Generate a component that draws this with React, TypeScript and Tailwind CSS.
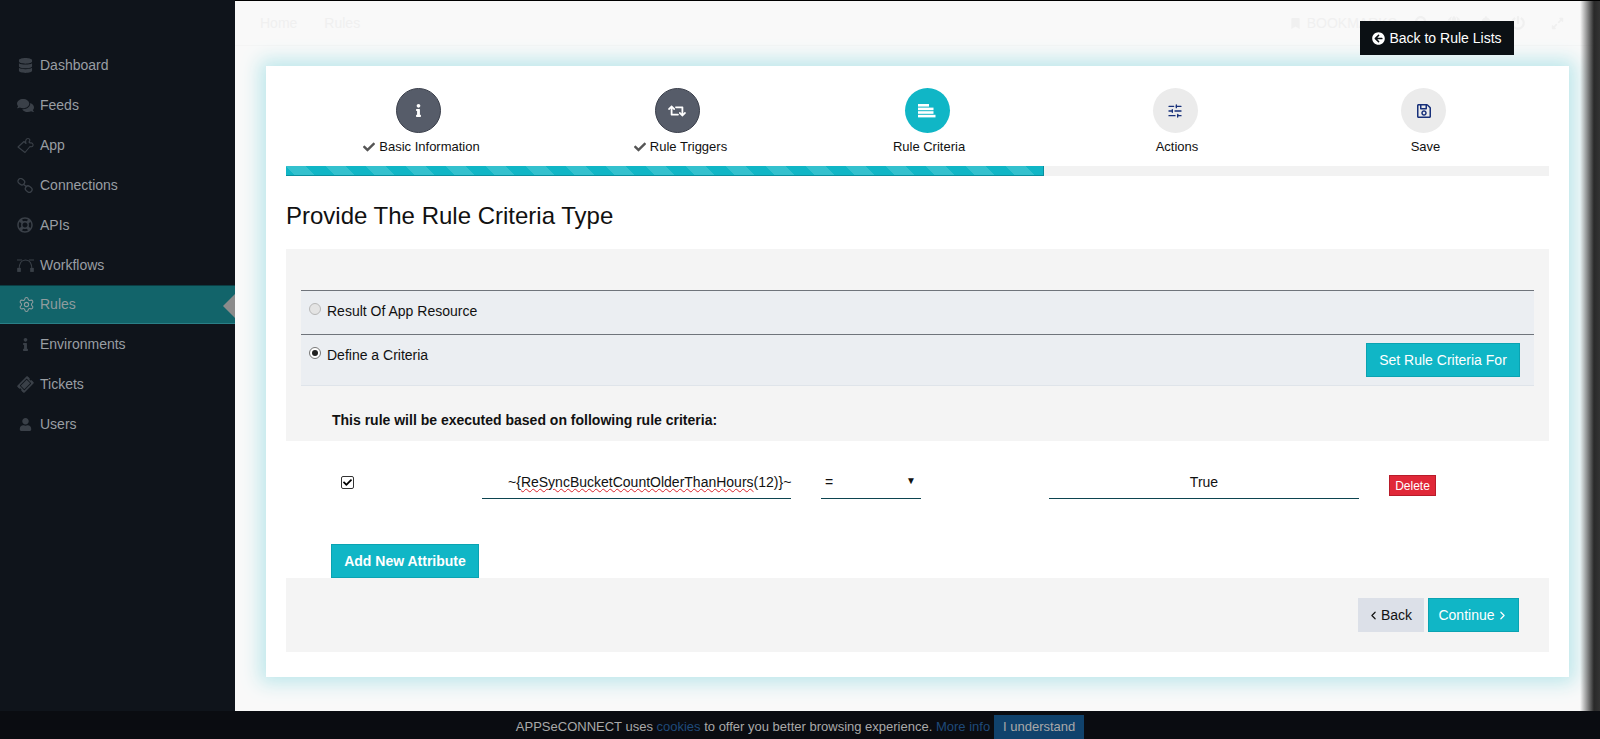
import React from "react";
import { FaDatabase, FaComments, FaRegLifeRing, FaInfo, FaTicketAlt, FaUser, FaRetweet, FaRegSave, FaCheck, FaArrowCircleLeft, FaBookmark, FaSearch, FaGlobe, FaBell, FaPowerOff, FaExpandAlt } from "react-icons/fa";
import { Settings, SlidersHorizontal, ChevronLeft, ChevronRight } from "lucide-react";

const Bezier = () => (
  <svg width="17" height="14" viewBox="0 0 17 14" fill="none" stroke="currentColor" strokeWidth="1.2">
    <path d="M2 12C2 5 5 2 8.5 2S15 5 15 12" />
    <rect x="0.8" y="10.5" width="2.4" height="2.8" fill="currentColor" />
    <rect x="13.8" y="10.5" width="2.4" height="2.8" fill="currentColor" />
    <path d="M0 2h5M12 2h5" />
  </svg>
);
const Chain = () => (
  <svg width="16" height="15" viewBox="0 0 16 15" fill="none" stroke="currentColor" strokeWidth="1.3">
    <rect x="0.8" y="1" width="7" height="5.4" rx="2.7" transform="rotate(38 4.3 3.7)" />
    <rect x="8.2" y="8.4" width="7" height="5.4" rx="2.7" transform="rotate(38 11.7 11.1)" />
    <path d="M6 6l4 3" />
  </svg>
);
const PieceOutline = () => (
  <svg width="17" height="17" viewBox="0 0 17 17" fill="none" stroke="currentColor" strokeWidth="1.1" strokeLinejoin="round">
    <path d="M1 10L7 4.5L9 6.5C8 4 9 1.5 11 1.5C13 1.5 13.5 3.5 12 5L13 6C15 5.5 16.5 6.5 16 8.5C15.5 10 14 10 13 9.5L8 15.5Z" />
  </svg>
);
const CriteriaIcon = () => (
  <svg width="18" height="14" viewBox="0 0 18 14" fill="#fff">
    <rect x="0" y="0" width="11" height="2.6" />
    <rect x="0" y="3.6" width="15.5" height="2.6" />
    <rect x="0" y="7.2" width="15.5" height="2.6" />
    <rect x="0" y="10.8" width="17.5" height="2.6" />
  </svg>
);

const nav: { label: string; icon: React.ReactNode; active?: boolean }[] = [
  { label: "Dashboard", icon: <FaDatabase size={15} /> },
  { label: "Feeds", icon: <FaComments size={17} /> },
  { label: "App", icon: <PieceOutline /> },
  { label: "Connections", icon: <Chain /> },
  { label: "APIs", icon: <FaRegLifeRing size={16} /> },
  { label: "Workflows", icon: <Bezier /> },
  { label: "Rules", icon: <Settings size={17} strokeWidth={1.5} />, active: true },
  { label: "Environments", icon: <FaInfo size={13} /> },
  { label: "Tickets", icon: <FaTicketAlt size={15} className="-rotate-45" /> },
  { label: "Users", icon: <FaUser size={13} /> },
];

const steps: { label: string; done?: boolean; tone: "done" | "current" | "todo"; icon: React.ReactNode }[] = [
  { label: "Basic Information", done: true, tone: "done", icon: <FaInfo size={13} className="text-white" /> },
  { label: "Rule Triggers", done: true, tone: "done", icon: <FaRetweet size={18} className="text-white" /> },
  { label: "Rule Criteria", tone: "current", icon: <CriteriaIcon /> },
  { label: "Actions", tone: "todo", icon: <SlidersHorizontal size={16} strokeWidth={2} className="text-[#17307a]" /> },
  { label: "Save", tone: "todo", icon: <FaRegSave size={16} className="text-[#17307a]" /> },
];

export default function App() {
  return (
    <div className="relative flex h-[739px] w-[1600px] flex-col overflow-hidden bg-[#f9f9f9] font-['Liberation_Sans',Arial,sans-serif] text-[14px] text-[#111]">
      <div className="flex h-[711px]">
        <aside className="w-[235px] shrink-0 bg-[#0f141b] pt-[45px]">
          {nav.map((n) => (
            <div
              key={n.label}
              className={
                n.active
                  ? "relative flex h-[39px] items-center border-t border-b border-t-[#0b3e44] border-b-[#2a7f87] bg-[#12646a] text-[#8f9c9e]"
                  : "flex h-10 items-center text-[#999ea3]"
              }
            >
              <span className={n.active ? "flex w-[40px] justify-center pl-[12px] text-[#8f9c9e]" : "flex w-[40px] justify-center pl-[10px] text-[#3a4048]"}>{n.icon}</span>
              <span>{n.label}</span>
              {n.active && <span className="absolute right-0 top-[8px] h-0 w-0 border-y-[12px] border-r-[12px] border-y-transparent border-r-[#8b8b8b]" />}
            </div>
          ))}
        </aside>

        <main className="relative flex-1 border-t border-black">
          <header className="flex h-[45px] items-center border-b border-[#f5f5f5] pl-[25px] pr-[36px] text-[14px] text-[#f0f0f0]">
            <span>Home</span>
            <span className="ml-[27px]">Rules</span>
            <div className="ml-auto flex items-center gap-[18px]">
              <span className="flex items-center gap-[6px]"><FaBookmark size={11} />BOOKMARKS</span>
              <FaSearch size={14} />
              <FaGlobe size={14} />
              <FaBell size={14} />
              <FaPowerOff size={14} />
              <span className="ml-[8px]"><FaExpandAlt size={13} /></span>
            </div>
          </header>

          <section className="ml-[31px] mt-[20px] h-[611px] w-[1303px] bg-white px-[20px] pt-[22px] shadow-[0_0_18px_6px_#bce7eb]">
            <div className="grid grid-cols-[264px_254px_246px_250px_247px]">
              {steps.map((s) => (
                <div key={s.label} className="flex flex-col items-center">
                  <div
                    className={
                      s.tone === "done"
                        ? "flex h-[45px] w-[45px] items-center justify-center rounded-full border border-[#3a3f4b] bg-[#565c69]"
                        : s.tone === "current"
                        ? "flex h-[45px] w-[45px] items-center justify-center rounded-full bg-[#10b6c6]"
                        : "flex h-[45px] w-[45px] items-center justify-center rounded-full bg-[#ebebeb]"
                    }
                  >
                    {s.icon}
                  </div>
                  <div className={s.done ? "mt-[4px] flex h-[20px] items-center gap-[4px] pl-[7px] text-[13px] text-[#111]" : "mt-[4px] flex h-[20px] items-center gap-[4px] pl-[4px] text-[13px] text-[#111]"}>
                    {s.done && <FaCheck size={12} className="text-[#555]" />}
                    <span>{s.label}</span>
                  </div>
                </div>
              ))}
            </div>

            <div className="mt-[9px] h-[10px] w-full bg-[#f2f2f2]">
              <div className="h-full w-[758px] border-b border-r border-[#0a8f9e] bg-[#10b6c6] bg-[linear-gradient(45deg,rgba(255,255,255,0.15)_25%,transparent_25%,transparent_50%,rgba(255,255,255,0.15)_50%,rgba(255,255,255,0.15)_75%,transparent_75%)] bg-[length:40px_40px]" />
            </div>

            <h1 className="mt-[25px] h-[30px] text-[24px] leading-[30px] text-[#111]">Provide The Rule Criteria Type</h1>

            <div className="mt-[18px] h-[192px] bg-[#f4f4f4] px-[15px] pt-[41px]">
              <div className="flex h-[44px] items-start border-t border-[#6f747b] bg-[#ebeef2] pl-[8px] pt-[10px]">
                <span className="mr-[6px] mt-[2px] h-[12px] w-[12px] rounded-full border border-[#b8b8b8] bg-[#e4e4e4]" />
                <span>Result Of App Resource</span>
              </div>
              <div className="flex h-[52px] items-start justify-between border-b border-t border-b-[#dfe4ea] border-t-[#6f747b] bg-[#ebeef2] pl-[8px] pr-[14px] pt-[10px]">
                <div className="flex items-start">
                  <span className="mr-[6px] mt-[2px] flex h-[12px] w-[12px] items-center justify-center rounded-full border border-[#777] bg-white">
                    <span className="h-[6px] w-[6px] rounded-full bg-[#222]" />
                  </span>
                  <span>Define a Criteria</span>
                </div>
                <button className="-mt-[2px] flex h-[34px] w-[154px] items-center justify-center border border-[#0aa3b2] bg-[#10b6c6] text-[14px] text-white">Set Rule Criteria For</button>
              </div>
              <p className="ml-[31px] mt-[24px] text-[14px] font-bold leading-[20px] text-[#111]">This rule will be executed based on following rule criteria:</p>
            </div>

            <div className="mt-[23px] flex h-[35px] items-start">
              <span className="ml-[55px] mt-[12px] flex h-[13px] w-[13px] items-center justify-center rounded-[2px] border border-[#333] bg-white">
                <FaCheck size={9} className="text-[#000]" />
              </span>
              <div className="ml-[128px] h-[35px] w-[309px] whitespace-nowrap border-b border-[#0c4450] pl-[26px] pt-[9px] text-left leading-[18px]">
                ~{"{"}<span className="underline decoration-[#d8232a] decoration-wavy decoration-1">ReSyncBucketCountOlderThanHours</span>(12){"}"}~
              </div>
              <div className="ml-[30px] flex h-[35px] w-[100px] justify-between border-b border-[#0c4450] pl-[4px] pr-[5px] pt-[9px] leading-[18px]">
                <span>=</span>
                <span className="text-[10px] leading-[16px]">▼</span>
              </div>
              <div className="ml-[128px] h-[35px] w-[310px] border-b border-[#0c4450] pt-[9px] text-center leading-[18px]">True</div>
              <button className="ml-[30px] mt-[11px] flex h-[21px] w-[47px] items-center justify-center border border-[#b81c2a] bg-[#e02838] text-[12px] text-white">Delete</button>
            </div>

            <button className="ml-[45px] mt-[45px] flex h-[34px] w-[148px] items-center justify-center border border-[#0aa3b2] bg-[#10b6c6] text-[14px] font-bold text-white">Add New Attribute</button>

            <div className="flex h-[74px] items-start justify-end gap-[4px] bg-[#f4f4f4] pr-[30px] pt-[20px]">
              <button className="flex h-[34px] w-[66px] items-center justify-center gap-[1px] bg-[#dce0e8] pr-[3px] text-[14px] text-[#111]"><ChevronLeft size={13} strokeWidth={2.2} />Back</button>
              <button className="flex h-[34px] w-[91px] items-center justify-center gap-[1px] border border-[#0aa3b2] bg-[#10b6c6] text-[14px] text-white">Continue<ChevronRight size={13} strokeWidth={2.2} /></button>
            </div>
          </section>

          <button className="absolute left-[1125px] top-[20px] flex h-[34px] w-[154px] items-center justify-center gap-[4px] bg-[#0b1014] text-[14px] text-white">
            <FaArrowCircleLeft size={13} />Back to Rule Lists
          </button>
          <div className="pointer-events-none absolute bottom-0 right-0 top-0 w-[20px] bg-[linear-gradient(to_right,rgba(30,30,30,0),rgba(30,30,30,0.95)_70%,#333)]" />
        </main>
      </div>

      <footer className="flex h-[28px] items-start justify-center bg-[#0a0c11] text-[13px] text-[#a9a9a9]">
        <span className="pt-[6px]">APPSeCONNECT uses <span className="text-[#1f4a7a]">cookies</span> to offer you better browsing experience. <span className="text-[#1f4a7a]">More info</span></span>
        <button className="ml-[4px] mt-[4px] h-[24px] w-[90px] bg-[#10426c] text-[13px] text-[#a9a9a9]">I understand</button>
      </footer>
    </div>
  );
}
